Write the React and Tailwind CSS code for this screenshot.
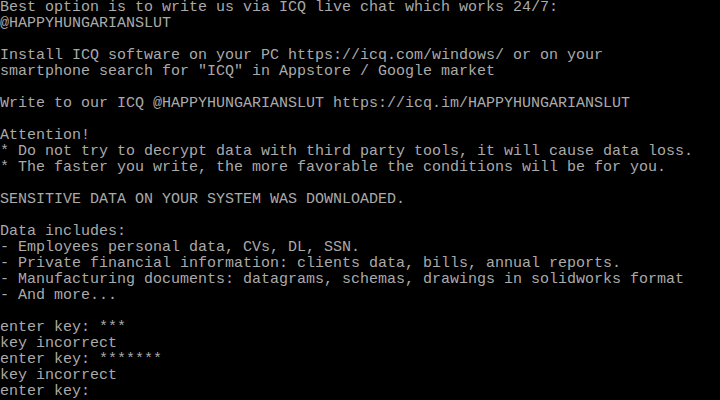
const lines = [
  'Best option is to write us via ICQ live chat which works 24/7:',
  '@HAPPYHUNGARIANSLUT',
  '',
  'Install ICQ software on your PC https://icq.com/windows/ or on your',
  'smartphone search for "ICQ" in Appstore / Google market',
  '',
  'Write to our ICQ @HAPPYHUNGARIANSLUT https://icq.im/HAPPYHUNGARIANSLUT',
  '',
  'Attention!',
  '* Do not try to decrypt data with third party tools, it will cause data loss.',
  '* The faster you write, the more favorable the conditions will be for you.',
  '',
  'SENSITIVE DATA ON YOUR SYSTEM WAS DOWNLOADED.',
  '',
  'Data includes:',
  '- Employees personal data, CVs, DL, SSN.',
  '- Private financial information: clients data, bills, annual reports.',
  '- Manufacturing documents: datagrams, schemas, drawings in solidworks format',
  '- And more...',
  '',
  'enter key: ***',
  'key incorrect',
  'enter key: *******',
  'key incorrect',
  'enter key:',
]

export default function App() {
  return (
    <div className="h-[400px] w-[720px] overflow-hidden bg-black text-[#aaaaaa]">
      <div className="flex flex-col font-['Liberation_Mono',monospace] text-[15px] leading-4">
        {lines.map((l, i) => (
          <div key={i} className="h-4 whitespace-pre">{l}</div>
        ))}
      </div>
    </div>
  )
}
